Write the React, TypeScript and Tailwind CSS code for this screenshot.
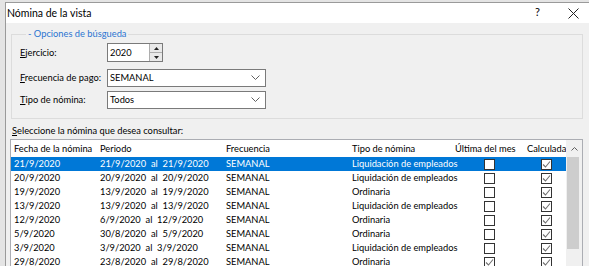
import React from "react";

const rows = [
  { f: "21/9/2020", p: "21/9/2020  al  21/9/2020", t: "Liquidación de empleados", u: false, c: true },
  { f: "20/9/2020", p: "20/9/2020  al  20/9/2020", t: "Liquidación de empleados", u: false, c: true },
  { f: "19/9/2020", p: "13/9/2020  al  19/9/2020", t: "Ordinaria", u: false, c: true },
  { f: "13/9/2020", p: "13/9/2020  al  13/9/2020", t: "Liquidación de empleados", u: false, c: true },
  { f: "12/9/2020", p: "6/9/2020  al  12/9/2020", t: "Ordinaria", u: false, c: true },
  { f: "5/9/2020", p: "30/8/2020  al  5/9/2020", t: "Ordinaria", u: false, c: true },
  { f: "3/9/2020", p: "3/9/2020  al  3/9/2020", t: "Liquidación de empleados", u: false, c: true },
  { f: "29/8/2020", p: "23/8/2020  al  29/8/2020", t: "Ordinaria", u: true, c: true },
];

function Check({ on }: { on: boolean }) {
  return (
    <div className="w-[11px] h-[11px] border border-[#333333] bg-white flex items-center justify-center">
      {on && (
        <svg width="9" height="9" viewBox="0 0 9 9">
          <polyline points="1,4.5 3.5,7 8,1.5" fill="none" stroke="#707070" strokeWidth="1.1" />
        </svg>
      )}
    </div>
  );
}

function Chevron() {
  return (
    <svg width="9" height="6" viewBox="0 0 9 6">
      <polyline points="0.5,0.5 4.5,4.5 8.5,0.5" fill="none" stroke="#606060" strokeWidth="1" />
    </svg>
  );
}

export default function App() {
  return (
    <div
      className="w-[589px] h-[266px] overflow-hidden bg-[#e4e4e4] pt-[2px] pl-[5px] text-[9.3px] text-black leading-[12px] whitespace-nowrap"
      style={{ fontFamily: "Lato, 'Noto Sans', sans-serif" }}
    >
      <div className="w-[600px] h-[300px] border-l border-t border-[#9a9a9a] bg-[#f0f0f0] flex flex-col">
        {/* title bar */}
        <div className="h-[20px] bg-white flex items-center pl-[1px] relative shrink-0">
          <span className="text-[10.5px]">Nómina de la vista</span>
          <span className="absolute left-[529px] top-[3px] text-[11px]">?</span>
          <svg className="absolute left-[562px] top-[5px]" width="11" height="11" viewBox="0 0 11 11">
            <path d="M0.5 0.5 L10.5 10.5 M10.5 0.5 L0.5 10.5" stroke="#222" strokeWidth="1" />
          </svg>
        </div>

        <div className="pl-[4px] flex flex-col">
          {/* group box */}
          <fieldset className="ml-[1px] mt-[5px] w-[572px] border border-[#dcdcdc] pl-[8px] pt-[3px] pb-[9px]">
            <legend className="ml-[6px] px-[2px] text-[#2a74d0]">- Opciones de búsgueda</legend>
            <div className="flex items-center h-[19px]">
              <div className="w-[87px]"><u>E</u>jercicio:</div>
              <div className="w-[56px] h-[19px] border border-[#7a7a7a] bg-white flex">
                <div className="flex-1 pl-[2px] flex items-center">2020</div>
                <div className="w-[13px] flex flex-col border-l border-[#adadad]">
                  <div className="flex-1 bg-[#e9e9e9] border-b border-[#adadad] flex items-center justify-center">
                    <svg width="5" height="3" viewBox="0 0 5 3"><polygon points="0,3 2.5,0 5,3" fill="#222" /></svg>
                  </div>
                  <div className="flex-1 bg-[#e9e9e9] flex items-center justify-center">
                    <svg width="5" height="3" viewBox="0 0 5 3"><polygon points="0,0 2.5,3 5,0" fill="#222" /></svg>
                  </div>
                </div>
              </div>
            </div>
            <div className="flex items-center h-[18px] mt-[7px]">
              <div className="w-[87px]"><u>F</u>recuencia de pago:</div>
              <div className="w-[159px] h-[18px] border border-[#7a7a7a] bg-white flex items-center pl-[2px] pr-[5px]">
                <div className="flex-1">SEMANAL</div>
                <Chevron />
              </div>
            </div>
            <div className="flex items-center h-[18px] mt-[4px]">
              <div className="w-[87px]"><u>T</u>ipo de nómina:</div>
              <div className="w-[159px] h-[18px] border border-[#7a7a7a] bg-white flex items-center pl-[2px] pr-[5px]">
                <div className="flex-1">Todos</div>
                <Chevron />
              </div>
            </div>
          </fieldset>

          <div className="mt-[6px] pl-[2px]"><u>S</u>eleccione la nómina que desea consultar:</div>

          {/* list */}
          <div className="mt-[2px] w-[573px] h-[140px] border border-[#abadb3] bg-white flex">
            <div className="w-[555px] flex flex-col">
              <div className="h-[17px] grid grid-cols-[86px_126px_126px_103px_71px_43px] items-center">
                <div className="pl-[3px]">Fecha de la nómina</div>
                <div className="pl-[3px]">Periodo</div>
                <div className="pl-[3px]">Frecuencia</div>
                <div className="pl-[3px]">Tipo de nómina</div>
                <div className="pl-[3px]">Última del mes</div>
                <div className="pl-[4px]">Calculada</div>
              </div>
              {rows.map((r, i) => (
                <div
                  key={i}
                  className={
                    i === 0
                      ? "h-[14px] grid grid-cols-[86px_126px_126px_103px_71px_43px] items-center bg-[#0078d7] text-white"
                      : "h-[14px] grid grid-cols-[86px_126px_126px_103px_71px_43px] items-center"
                  }
                >
                  <div className="pl-[3px]">{r.f}</div>
                  <div className="pl-[3px] whitespace-pre">{r.p}</div>
                  <div className="pl-[3px]">SEMANAL</div>
                  <div className="pl-[3px]">{r.t}</div>
                  <div className="flex justify-center pl-[3px]"><Check on={r.u} /></div>
                  <div className="flex justify-center pl-[4px]"><Check on={r.c} /></div>
                </div>
              ))}
            </div>
            <div className="w-[17px] bg-[#f0f0f0] flex flex-col">
              <div className="h-[17px] flex items-center justify-center">
                <svg width="7" height="4" viewBox="0 0 7 4">
                  <polyline points="0.5,3.5 3.5,0.5 6.5,3.5" fill="none" stroke="#606060" strokeWidth="1" />
                </svg>
              </div>
              <div className="h-[92px] ml-[1px] mr-[3px] bg-[#cdcdcd]" />
            </div>
          </div>
        </div>
      </div>
    </div>
  );
}
